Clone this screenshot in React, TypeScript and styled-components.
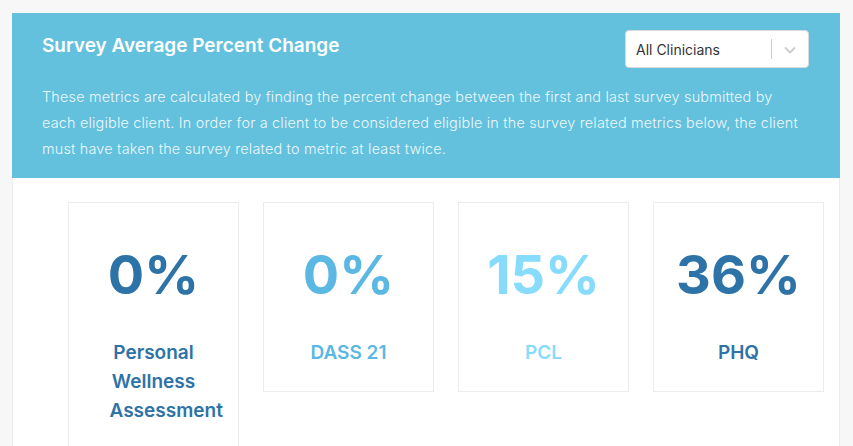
import React from "react";
import styled, { createGlobalStyle } from "styled-components";

const Global = createGlobalStyle`
  html, body { margin: 0; padding: 0; background: #f7f7f7; }
  body { font-family: Inter, "Noto Sans", sans-serif; }
  * { box-sizing: border-box; }
`;

const Page = styled.div`
  padding: 13px 13px 0 12px;
  height: 446px;
  overflow: hidden;
`;

const Panel = styled.section`
  background: #ffffff;
  border: 1px solid #ececec;
  border-bottom: none;
  min-height: 460px;
`;

const Header = styled.header`
  background: #64c1de;
  padding: 20px 31px 16px 30px;
  margin: -1px -1px 0 -1px;
`;

const TopRow = styled.div`
  display: flex;
  justify-content: space-between;
  align-items: flex-start;
`;

const Title = styled.h2`
  margin: 0;
  padding-top: 1px;
  font-size: 19px;
  font-weight: 600;
  color: #ffffff;
  line-height: 24px;
`;

const Select = styled.div`
  width: 184px;
  height: 38px;
  margin-top: -3px;
  background: #ffffff;
  border: 1px solid #d9d9d9;
  border-radius: 4px;
  display: flex;
  align-items: center;
`;

const SelectValue = styled.span`
  flex: 1;
  padding-left: 10px;
  font-size: 14px;
  color: #333333;
`;

const Separator = styled.span`
  width: 1px;
  height: 20px;
  background: #cccccc;
`;

const Chevron = styled.span`
  width: 36px;
  display: flex;
  justify-content: center;
  align-items: center;
  padding-top: 1px;
`;

const Description = styled.p`
  margin: 16px 0 0 0;
  font-size: 14.4px;
  letter-spacing: 0.2px;
  font-weight: 300;
  line-height: 26px;
  color: rgba(255, 255, 255, 0.9);
  max-width: 764px;
`;

const Body = styled.div`
  display: flex;
  align-items: flex-start;
  gap: 24px;
  padding: 24px 16px 0 55px;
`;

const Card = styled.div`
  width: 171px;
  flex: none;
  border: 1px solid #ececec;
  padding: 39px 0 24px;
  display: flex;
  flex-direction: column;
  align-items: center;
  text-align: center;
`;

const Value = styled.div<{ $color: string }>`
  font-size: 54px;
  font-weight: 700;
  line-height: 66px;
  color: ${(p) => p.$color};
`;

const Label = styled.div<{ $color: string }>`
  margin-top: 30px;
  width: 88px;
  font-size: 19px;
  font-weight: 600;
  line-height: 29px;
  color: ${(p) => p.$color};
`;

const DARK = "#2d73a8";
const MID = "#5ab8e2";
const LIGHT = "#87dbfd";

const metrics = [
  { value: "0%", label: "Personal Wellness Assessment", color: DARK },
  { value: "0%", label: "DASS 21", color: MID },
  { value: "15%", label: "PCL", color: LIGHT },
  { value: "36%", label: "PHQ", color: DARK },
];

export default function App() {
  return (
    <>
      <Global />
      <Page>
        <Panel>
          <Header>
            <TopRow>
              <Title>Survey Average Percent Change</Title>
              <Select>
                <SelectValue>All Clinicians</SelectValue>
                <Separator />
                <Chevron>
                  <svg width="14" height="14" viewBox="0 0 14 14">
                    <path d="M2.5 5 L7 9.5 L11.5 5" fill="none" stroke="#cccccc" strokeWidth="1.8" strokeLinecap="round" />
                  </svg>
                </Chevron>
              </Select>
            </TopRow>
            <Description>
              These metrics are calculated by finding the percent change between the first and last survey submitted by
              each eligible client. In order for a client to be considered eligible in the survey related metrics below, the client
              must have taken the survey related to metric at least twice.
            </Description>
          </Header>
          <Body>
            {metrics.map((m) => (
              <Card key={m.label}>
                <Value $color={m.color}>{m.value}</Value>
                <Label $color={m.color}>{m.label}</Label>
              </Card>
            ))}
          </Body>
        </Panel>
      </Page>
    </>
  );
}
